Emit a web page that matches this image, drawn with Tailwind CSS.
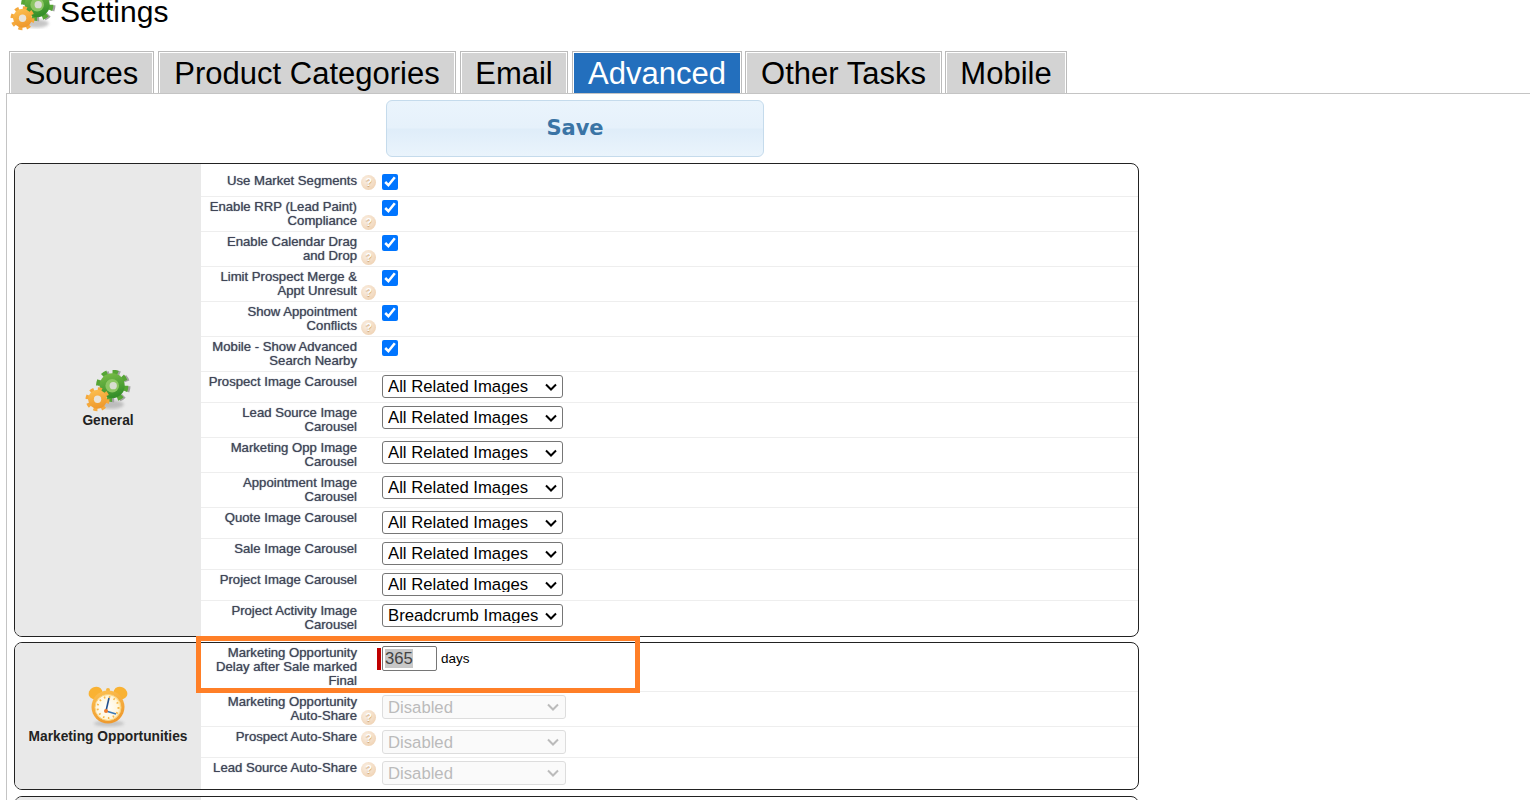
<!DOCTYPE html>
<html lang="en">
<head>
    <meta charset="UTF-8">
    <meta name="viewport" content="width=device-width, initial-scale=1.0">
    <title>Settings</title>
    <script src="https://cdn.jsdelivr.net/npm/@tailwindcss/browser@4"></script>
</head>
<body class="relative h-[800px] overflow-hidden bg-white text-black font-['Liberation_Sans',Arial,sans-serif]">
    <!-- shared icons -->
    <svg class="absolute w-0 h-0" width="0" height="0">
        <defs>
            <linearGradient id="green" x1="0" y1="0" x2="0.3" y2="1"><stop offset="0" stop-color="#7fc04a"/><stop offset="1" stop-color="#358f2a"/></linearGradient>
            <linearGradient id="orange" x1="0" y1="0" x2="0.3" y2="1"><stop offset="0" stop-color="#fdc253"/><stop offset="1" stop-color="#ef9a2e"/></linearGradient>
            <radialGradient id="face" cx="0.45" cy="0.5" r="0.55"><stop offset="0" stop-color="#fff"/><stop offset="0.8" stop-color="#fff6dd"/><stop offset="1" stop-color="#ffe39a"/></radialGradient>
            <filter id="soft"><feGaussianBlur stdDeviation="1.6"/></filter>
            <filter id="tiny"><feGaussianBlur stdDeviation="0.35"/></filter>
            <symbol id="gears" viewBox="0 0 44 44">
                <ellipse cx="25" cy="33" rx="12" ry="4" fill="#999" opacity="0.55" filter="url(#soft)"/>
                <g filter="url(#tiny)">
                    <circle cx="28" cy="15.5" r="13" fill="none" stroke="#a3a3a3" stroke-width="5" stroke-dasharray="5.1 5.1"/>
                    <circle cx="26" cy="15" r="13" fill="none" stroke="#56a535" stroke-width="5" stroke-dasharray="5.1 5.1"/>
                    <circle cx="26" cy="15" r="12" fill="url(#green)"/>
                    <circle cx="26" cy="15" r="6.5" fill="#8cc663"/>
                    <circle cx="27" cy="15" r="3.5" fill="#d9ddd2"/>
                    <circle cx="12" cy="28" r="9.5" fill="none" stroke="#f5a93c" stroke-width="4" stroke-dasharray="3.73 3.73"/>
                    <circle cx="12" cy="28" r="9" fill="url(#orange)"/>
                    <circle cx="12" cy="28" r="3.5" fill="#e9e4da"/>
                </g>
            </symbol>
            <symbol id="clock" viewBox="0 0 42 42">
                <ellipse cx="22" cy="37.5" rx="15" ry="3" fill="#aaa" opacity="0.6" filter="url(#soft)"/>
                <ellipse cx="8.5" cy="7" rx="7" ry="6" fill="#f9b233" transform="rotate(-25 8.5 7)"/>
                <ellipse cx="33.5" cy="7" rx="7" ry="6" fill="#f9b233" transform="rotate(25 33.5 7)"/>
                <circle cx="21" cy="4" r="2" fill="#f6b53c"/>
                <circle cx="21" cy="21" r="16.5" fill="url(#orange)"/>
                <circle cx="21" cy="21.5" r="13" fill="url(#face)" stroke="#f8d27f" stroke-width="1"/>
                <circle cx="21" cy="21.5" r="10.5" fill="none" stroke="#f7b84a" stroke-width="2" stroke-dasharray="1.5 3.5"/>
                <path d="M19 25 L22 12" stroke="#24508f" stroke-width="1.6" fill="none"/>
                <path d="M19 25 L29 28" stroke="#3a78b5" stroke-width="1.6" fill="none"/>
                <circle cx="19" cy="25" r="2" fill="#ee7a2a"/>
            </symbol>
        </defs>
    </svg>

    <!-- page title -->
    <div class="flex h-[51px] overflow-hidden">
        <svg class="ml-[10px] -mt-[11px] w-[46px] h-[46px] shrink-0"><use href="#gears"/></svg>
        <h1 class="ml-[4px] text-[30px] leading-[24px]">Settings</h1>
    </div>

    <!-- tabs -->
    <div class="flex ml-[9px] h-[42px] text-[31px] leading-[40px] text-center">
        <div class="w-[145px] border border-b-0 border-[#bbb] p-[1px] pb-0"><div class="h-[40px] pt-[1px] bg-[#d3d3d3]">Sources</div></div>
        <div class="ml-[4px] w-[298px] border border-b-0 border-[#bbb] p-[1px] pb-0"><div class="h-[40px] pt-[1px] bg-[#d3d3d3]">Product Categories</div></div>
        <div class="ml-[4px] w-[108px] border border-b-0 border-[#bbb] p-[1px] pb-0"><div class="h-[40px] pt-[1px] bg-[#d3d3d3]">Email</div></div>
        <div class="ml-[4px] w-[170px] border border-b-0 border-[#bbb] p-[1px] pb-0"><div class="h-[40px] pt-[1px] bg-[#236fbd] text-white">Advanced</div></div>
        <div class="ml-[3px] w-[197px] border border-b-0 border-[#bbb] p-[1px] pb-0"><div class="h-[40px] pt-[1px] bg-[#d3d3d3]">Other Tasks</div></div>
        <div class="ml-[3px] w-[122px] border border-b-0 border-[#bbb] p-[1px] pb-0"><div class="h-[40px] pt-[1px] bg-[#d3d3d3]">Mobile</div></div>
    </div>

    <div class="ml-[6px] border-l border-t border-[#c4c4c4] pl-[7px] h-[707px]">
        <button class="block ml-[372px] mt-[6px] mb-[6px] w-[378px] h-[57px] rounded-[6px] border border-[#c5dbec] bg-[linear-gradient(#eaf4fc_0%,#e6f1fb_48%,#dfedf9_52%,#eaf4fc_100%)] text-[#3a74a5] font-bold text-[21px] font-['DejaVu_Sans',sans-serif]">Save</button>

        <!-- General -->
        <div class="flex w-[1125px] rounded-[8px] border border-[#222] overflow-hidden">
            <div class="w-[186px] bg-[#e9e9e9] flex flex-col items-center justify-center shrink-0 pb-[2px]">
                <svg class="w-[46px] h-[46px]"><use href="#gears"/></svg>
                <div class="text-[13.75px] leading-[16px] font-bold text-[#222] -mt-[3px]">General</div>
            </div>
            <div class="flex-1 text-[13.15px] leading-[14px] text-[#3f4556] [text-shadow:0_0_1px_#666c80]">
                <div class="flex h-[33px] pt-[10px] border-b border-[#eee]">
                    <div class="flex items-end self-start ml-[4px]"><div class="w-[152px] text-right">Use Market Segments</div><span class="ml-[4px] -mb-[2px] w-[15px] h-[15px] rounded-full bg-[radial-gradient(circle_at_40%_35%,#fbf1e6,#eccaa6)] text-white font-bold text-[11px] leading-[15px] text-center [text-shadow:0_1px_1px_#c79a66]">?</span></div>
                    <input type="checkbox" checked class="ml-[6px] w-4 h-4 accent-[#0075ff]">
                </div>
                <div class="flex h-[35px] pt-[3px] border-b border-[#eee]">
                    <div class="flex items-end self-start ml-[4px]"><div class="w-[152px] text-right">Enable RRP (Lead Paint) Compliance</div><span class="ml-[4px] -mb-[2px] w-[15px] h-[15px] rounded-full bg-[radial-gradient(circle_at_40%_35%,#fbf1e6,#eccaa6)] text-white font-bold text-[11px] leading-[15px] text-center [text-shadow:0_1px_1px_#c79a66]">?</span></div>
                    <input type="checkbox" checked class="ml-[6px] w-4 h-4 accent-[#0075ff]">
                </div>
                <div class="flex h-[35px] pt-[3px] border-b border-[#eee]">
                    <div class="flex items-end self-start ml-[4px]"><div class="w-[152px] text-right">Enable Calendar Drag and Drop</div><span class="ml-[4px] -mb-[2px] w-[15px] h-[15px] rounded-full bg-[radial-gradient(circle_at_40%_35%,#fbf1e6,#eccaa6)] text-white font-bold text-[11px] leading-[15px] text-center [text-shadow:0_1px_1px_#c79a66]">?</span></div>
                    <input type="checkbox" checked class="ml-[6px] w-4 h-4 accent-[#0075ff]">
                </div>
                <div class="flex h-[35px] pt-[3px] border-b border-[#eee]">
                    <div class="flex items-end self-start ml-[4px]"><div class="w-[152px] text-right">Limit Prospect Merge &amp; Appt Unresult</div><span class="ml-[4px] -mb-[2px] w-[15px] h-[15px] rounded-full bg-[radial-gradient(circle_at_40%_35%,#fbf1e6,#eccaa6)] text-white font-bold text-[11px] leading-[15px] text-center [text-shadow:0_1px_1px_#c79a66]">?</span></div>
                    <input type="checkbox" checked class="ml-[6px] w-4 h-4 accent-[#0075ff]">
                </div>
                <div class="flex h-[35px] pt-[3px] border-b border-[#eee]">
                    <div class="flex items-end self-start ml-[4px]"><div class="w-[152px] text-right">Show Appointment Conflicts</div><span class="ml-[4px] -mb-[2px] w-[15px] h-[15px] rounded-full bg-[radial-gradient(circle_at_40%_35%,#fbf1e6,#eccaa6)] text-white font-bold text-[11px] leading-[15px] text-center [text-shadow:0_1px_1px_#c79a66]">?</span></div>
                    <input type="checkbox" checked class="ml-[6px] w-4 h-4 accent-[#0075ff]">
                </div>
                <div class="flex h-[35px] pt-[3px] border-b border-[#eee]">
                    <div class="ml-[4px] w-[152px] text-right">Mobile - Show Advanced Search Nearby</div>
                    <input type="checkbox" checked class="ml-[25px] w-4 h-4 accent-[#0075ff]">
                </div>
                <div class="flex h-[31px] pt-[3px] border-b border-[#eee]">
                    <div class="ml-[4px] w-[152px] text-right">Prospect Image Carousel</div>
                    <select class="ml-[25px] w-[181px] h-[23px] pl-[5px] appearance-none border border-[#767676] rounded-[3px] bg-white bg-no-repeat bg-[position:right_5px_center] bg-[length:12px_8px] bg-[url('data:image/svg+xml,%3Csvg%20xmlns=%22http://www.w3.org/2000/svg%22%20viewBox=%220%200%2012%208%22%3E%3Cpath%20d=%22M1%201.5l5%205%205-5%22%20fill=%22none%22%20stroke=%22%23000%22%20stroke-width=%222%22/%3E%3C/svg%3E')] text-black text-[16.7px] [text-shadow:none]"><option>All Related Images</option></select>
                </div>
                <div class="flex h-[35px] pt-[3px] border-b border-[#eee]">
                    <div class="ml-[4px] w-[152px] text-right">Lead Source Image Carousel</div>
                    <select class="ml-[25px] w-[181px] h-[23px] pl-[5px] appearance-none border border-[#767676] rounded-[3px] bg-white bg-no-repeat bg-[position:right_5px_center] bg-[length:12px_8px] bg-[url('data:image/svg+xml,%3Csvg%20xmlns=%22http://www.w3.org/2000/svg%22%20viewBox=%220%200%2012%208%22%3E%3Cpath%20d=%22M1%201.5l5%205%205-5%22%20fill=%22none%22%20stroke=%22%23000%22%20stroke-width=%222%22/%3E%3C/svg%3E')] text-black text-[16.7px] [text-shadow:none]"><option>All Related Images</option></select>
                </div>
                <div class="flex h-[35px] pt-[3px] border-b border-[#eee]">
                    <div class="ml-[4px] w-[152px] text-right">Marketing Opp Image Carousel</div>
                    <select class="ml-[25px] w-[181px] h-[23px] pl-[5px] appearance-none border border-[#767676] rounded-[3px] bg-white bg-no-repeat bg-[position:right_5px_center] bg-[length:12px_8px] bg-[url('data:image/svg+xml,%3Csvg%20xmlns=%22http://www.w3.org/2000/svg%22%20viewBox=%220%200%2012%208%22%3E%3Cpath%20d=%22M1%201.5l5%205%205-5%22%20fill=%22none%22%20stroke=%22%23000%22%20stroke-width=%222%22/%3E%3C/svg%3E')] text-black text-[16.7px] [text-shadow:none]"><option>All Related Images</option></select>
                </div>
                <div class="flex h-[35px] pt-[3px] border-b border-[#eee]">
                    <div class="ml-[4px] w-[152px] text-right">Appointment Image Carousel</div>
                    <select class="ml-[25px] w-[181px] h-[23px] pl-[5px] appearance-none border border-[#767676] rounded-[3px] bg-white bg-no-repeat bg-[position:right_5px_center] bg-[length:12px_8px] bg-[url('data:image/svg+xml,%3Csvg%20xmlns=%22http://www.w3.org/2000/svg%22%20viewBox=%220%200%2012%208%22%3E%3Cpath%20d=%22M1%201.5l5%205%205-5%22%20fill=%22none%22%20stroke=%22%23000%22%20stroke-width=%222%22/%3E%3C/svg%3E')] text-black text-[16.7px] [text-shadow:none]"><option>All Related Images</option></select>
                </div>
                <div class="flex h-[31px] pt-[3px] border-b border-[#eee]">
                    <div class="ml-[4px] w-[152px] text-right">Quote Image Carousel</div>
                    <select class="ml-[25px] w-[181px] h-[23px] pl-[5px] appearance-none border border-[#767676] rounded-[3px] bg-white bg-no-repeat bg-[position:right_5px_center] bg-[length:12px_8px] bg-[url('data:image/svg+xml,%3Csvg%20xmlns=%22http://www.w3.org/2000/svg%22%20viewBox=%220%200%2012%208%22%3E%3Cpath%20d=%22M1%201.5l5%205%205-5%22%20fill=%22none%22%20stroke=%22%23000%22%20stroke-width=%222%22/%3E%3C/svg%3E')] text-black text-[16.7px] [text-shadow:none]"><option>All Related Images</option></select>
                </div>
                <div class="flex h-[31px] pt-[3px] border-b border-[#eee]">
                    <div class="ml-[4px] w-[152px] text-right">Sale Image Carousel</div>
                    <select class="ml-[25px] w-[181px] h-[23px] pl-[5px] appearance-none border border-[#767676] rounded-[3px] bg-white bg-no-repeat bg-[position:right_5px_center] bg-[length:12px_8px] bg-[url('data:image/svg+xml,%3Csvg%20xmlns=%22http://www.w3.org/2000/svg%22%20viewBox=%220%200%2012%208%22%3E%3Cpath%20d=%22M1%201.5l5%205%205-5%22%20fill=%22none%22%20stroke=%22%23000%22%20stroke-width=%222%22/%3E%3C/svg%3E')] text-black text-[16.7px] [text-shadow:none]"><option>All Related Images</option></select>
                </div>
                <div class="flex h-[31px] pt-[3px] border-b border-[#eee]">
                    <div class="ml-[4px] w-[152px] text-right">Project Image Carousel</div>
                    <select class="ml-[25px] w-[181px] h-[23px] pl-[5px] appearance-none border border-[#767676] rounded-[3px] bg-white bg-no-repeat bg-[position:right_5px_center] bg-[length:12px_8px] bg-[url('data:image/svg+xml,%3Csvg%20xmlns=%22http://www.w3.org/2000/svg%22%20viewBox=%220%200%2012%208%22%3E%3Cpath%20d=%22M1%201.5l5%205%205-5%22%20fill=%22none%22%20stroke=%22%23000%22%20stroke-width=%222%22/%3E%3C/svg%3E')] text-black text-[16.7px] [text-shadow:none]"><option>All Related Images</option></select>
                </div>
                <div class="flex h-[35px] pt-[3px]">
                    <div class="ml-[4px] w-[152px] text-right">Project Activity Image Carousel</div>
                    <select class="ml-[25px] w-[181px] h-[23px] pl-[5px] appearance-none border border-[#767676] rounded-[3px] bg-white bg-no-repeat bg-[position:right_5px_center] bg-[length:12px_8px] bg-[url('data:image/svg+xml,%3Csvg%20xmlns=%22http://www.w3.org/2000/svg%22%20viewBox=%220%200%2012%208%22%3E%3Cpath%20d=%22M1%201.5l5%205%205-5%22%20fill=%22none%22%20stroke=%22%23000%22%20stroke-width=%222%22/%3E%3C/svg%3E')] text-black text-[16.7px] [text-shadow:none]"><option>Breadcrumb Images</option></select>
                </div>
            </div>
        </div>

        <!-- Marketing Opportunities -->
        <div class="flex w-[1125px] mt-[5px] rounded-[8px] border border-[#222] overflow-hidden">
            <div class="w-[186px] bg-[#e9e9e9] flex flex-col items-center justify-center shrink-0 pb-[2px]">
                <svg class="w-[42px] h-[42px]"><use href="#clock"/></svg>
                <div class="text-[13.75px] leading-[16px] font-bold text-[#222] mt-[1px] whitespace-nowrap">Marketing Opportunities</div>
            </div>
            <div class="flex-1 text-[13.15px] leading-[14px] text-[#3f4556] [text-shadow:0_0_1px_#666c80]">
                <div class="flex h-[49px] pt-[3px] border-b border-[#eee]">
                    <div class="ml-[4px] w-[152px] text-right">Marketing Opportunity Delay after Sale marked Final</div>
                    <div class="ml-[20px] mt-[2px] w-[4px] h-[22px] bg-[#c00000]"></div>
                    <div class="ml-[1px] w-[55px] h-[25px] border border-[#767676] rounded-[2px] pl-[2px] text-[16.7px] leading-[24px] text-[#444] [text-shadow:none]"><span class="bg-[#c8c8c8]">365</span></div>
                    <div class="ml-[4px] mt-[6px] text-[13.5px] text-black [text-shadow:none]">days</div>
                </div>
                <div class="flex h-[35px] pt-[3px] border-b border-[#eee]">
                    <div class="flex items-end self-start ml-[4px]"><div class="w-[152px] text-right">Marketing Opportunity Auto-Share</div><span class="ml-[4px] -mb-[2px] w-[15px] h-[15px] rounded-full bg-[radial-gradient(circle_at_40%_35%,#fbf1e6,#eccaa6)] text-white font-bold text-[11px] leading-[15px] text-center [text-shadow:0_1px_1px_#c79a66]">?</span></div>
                    <select disabled class="ml-[6px] w-[184px] h-[24px] pl-[5px] pt-[2px] appearance-none border border-[#ddd] rounded-[3px] bg-[#fafafa] bg-no-repeat bg-[position:right_6px_center] bg-[length:12px_8px] bg-[url('data:image/svg+xml,%3Csvg%20xmlns=%22http://www.w3.org/2000/svg%22%20viewBox=%220%200%2012%208%22%3E%3Cpath%20d=%22M1%201.5l5%205%205-5%22%20fill=%22none%22%20stroke=%22%23bbb%22%20stroke-width=%222%22/%3E%3C/svg%3E')] text-[#bbb] text-[16.7px] [text-shadow:none]"><option>Disabled</option></select>
                </div>
                <div class="flex h-[31px] pt-[3px] border-b border-[#eee]">
                    <div class="flex items-end self-start ml-[4px]"><div class="w-[152px] text-right">Prospect Auto-Share</div><span class="ml-[4px] -mb-[2px] w-[15px] h-[15px] rounded-full bg-[radial-gradient(circle_at_40%_35%,#fbf1e6,#eccaa6)] text-white font-bold text-[11px] leading-[15px] text-center [text-shadow:0_1px_1px_#c79a66]">?</span></div>
                    <select disabled class="ml-[6px] w-[184px] h-[24px] pl-[5px] pt-[2px] appearance-none border border-[#ddd] rounded-[3px] bg-[#fafafa] bg-no-repeat bg-[position:right_6px_center] bg-[length:12px_8px] bg-[url('data:image/svg+xml,%3Csvg%20xmlns=%22http://www.w3.org/2000/svg%22%20viewBox=%220%200%2012%208%22%3E%3Cpath%20d=%22M1%201.5l5%205%205-5%22%20fill=%22none%22%20stroke=%22%23bbb%22%20stroke-width=%222%22/%3E%3C/svg%3E')] text-[#bbb] text-[16.7px] [text-shadow:none]"><option>Disabled</option></select>
                </div>
                <div class="flex h-[31px] pt-[3px]">
                    <div class="flex items-end self-start ml-[4px]"><div class="w-[152px] text-right">Lead Source Auto-Share</div><span class="ml-[4px] -mb-[2px] w-[15px] h-[15px] rounded-full bg-[radial-gradient(circle_at_40%_35%,#fbf1e6,#eccaa6)] text-white font-bold text-[11px] leading-[15px] text-center [text-shadow:0_1px_1px_#c79a66]">?</span></div>
                    <select disabled class="ml-[6px] w-[184px] h-[24px] pl-[5px] pt-[2px] appearance-none border border-[#ddd] rounded-[3px] bg-[#fafafa] bg-no-repeat bg-[position:right_6px_center] bg-[length:12px_8px] bg-[url('data:image/svg+xml,%3Csvg%20xmlns=%22http://www.w3.org/2000/svg%22%20viewBox=%220%200%2012%208%22%3E%3Cpath%20d=%22M1%201.5l5%205%205-5%22%20fill=%22none%22%20stroke=%22%23bbb%22%20stroke-width=%222%22/%3E%3C/svg%3E')] text-[#bbb] text-[16.7px] [text-shadow:none]"><option>Disabled</option></select>
                </div>
            </div>
        </div>

        <!-- next section, cut off by the window -->
        <div class="flex w-[1125px] mt-[6px] h-[40px] rounded-[8px] border border-[#222] overflow-hidden">
            <div class="w-[186px] bg-[#e9e9e9]"></div>
        </div>
    </div>

    <!-- orange annotation box -->
    <div class="absolute left-[196px] top-[636px] w-[444px] h-[57px] border-[5px] border-[#ff7f27]"></div>
</body>
</html>
